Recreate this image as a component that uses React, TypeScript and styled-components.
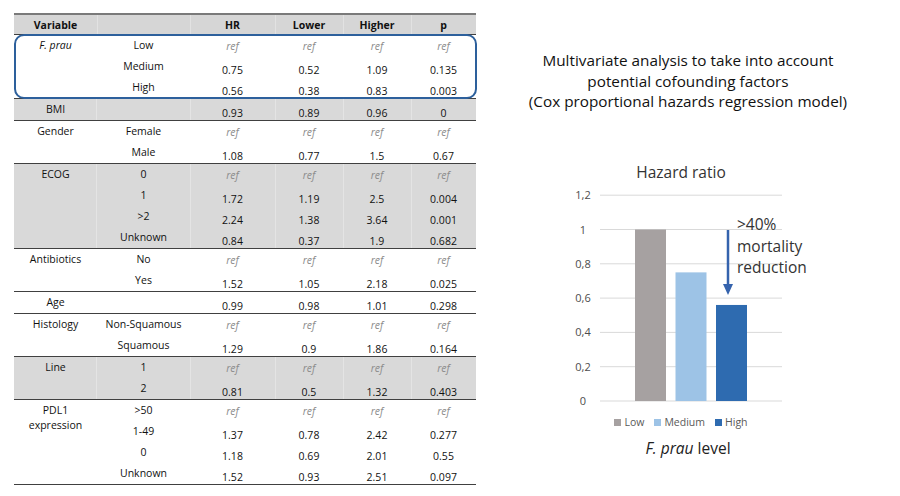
import React from 'react';
import styled, { createGlobalStyle, css } from 'styled-components';

const GlobalStyle = createGlobalStyle`
  html, body { margin: 0; padding: 0; background: #fff; }
  body { font-family: "Open Sans", "Liberation Sans", sans-serif; color: #111; }
`;

const Page = styled.div`
  display: flex;
  width: 900px;
  height: 496px;
  overflow: hidden;
  background: #fff;
`;

/* ---------- table ---------- */

const Table = styled.div`
  margin: 13px 0 0 14px;
  width: 462px;
  display: flex;
  flex-direction: column;
  font-size: 10.5px;
  flex-shrink: 0;
`;

const HeaderRow = styled.div`
  display: grid;
  grid-template-columns: 83px 93px 85px 68px 68px 65px;
  height: 19px;
  background: #d6d6d6;
  border-top: 2px solid #7a7a7a;
  border-bottom: 1px solid #404040;
  font-weight: 700;
  & > * + * { box-shadow: inset 1px 0 0 rgba(255, 255, 255, 0.3); }
`;

const HeadCell = styled.div`
  display: flex;
  align-items: center;
  justify-content: center;
`;

const Group = styled.div<{ $shaded?: boolean; $highlight?: boolean }>`
  position: relative;
  display: grid;
  grid-template-columns: 83px 1fr;
  border-bottom: 1px solid #404040;
  background: ${(p) => (p.$shaded ? '#d9d9d9' : 'transparent')};
  ${(p) =>
    p.$highlight &&
    css`
      &::after {
        content: '';
        position: absolute;
        left: 0;
        right: -1px;
        top: -1px;
        bottom: -1px;
        border: 2px solid #2d609c;
        border-radius: 10px;
        pointer-events: none;
      }
    `}
`;

const VarCell = styled.div<{ $shaded?: boolean; $italic?: boolean }>`
  text-align: center;
  line-height: 15px;
  padding-top: 3px;
  font-style: ${(p) => (p.$italic ? 'italic' : 'normal')};
  box-shadow: ${(p) => (p.$shaded ? 'inset -1px 0 0 rgba(255,255,255,0.3)' : 'none')};
`;

const SubRows = styled.div`
  display: flex;
  flex-direction: column;
`;

const SubRow = styled.div<{ $shaded?: boolean }>`
  display: grid;
  grid-template-columns: 93px 85px 68px 68px 65px;
  height: 21px;
  ${(p) =>
    p.$shaded &&
    css`
      & > * + * { box-shadow: inset 1px 0 0 rgba(255, 255, 255, 0.3); }
    `}
`;

const CatCell = styled.div`
  display: flex;
  align-items: center;
  justify-content: center;
  padding-bottom: 1px;
`;

const ValCell = styled.div<{ $isRef?: boolean }>`
  display: flex;
  align-items: center;
  justify-content: center;
  ${(p) =>
    p.$isRef
      ? css`
          font-style: italic;
          color: #8c8c8c;
        `
      : css`
          padding-top: 7px;
        `}
`;

type Row = [string, string, string, string, string] | [string];

interface GroupData {
  label: React.ReactNode;
  italic?: boolean;
  shaded?: boolean;
  highlight?: boolean;
  rows: Row[];
}

const groups: GroupData[] = [
  {
    label: 'F. prau',
    italic: true,
    highlight: true,
    rows: [['Low'], ['Medium', '0.75', '0.52', '1.09', '0.135'], ['High', '0.56', '0.38', '0.83', '0.003']],
  },
  { label: 'BMI', shaded: true, rows: [['', '0.93', '0.89', '0.96', '0']] },
  { label: 'Gender', rows: [['Female'], ['Male', '1.08', '0.77', '1.5', '0.67']] },
  {
    label: 'ECOG',
    shaded: true,
    rows: [
      ['0'],
      ['1', '1.72', '1.19', '2.5', '0.004'],
      ['>2', '2.24', '1.38', '3.64', '0.001'],
      ['Unknown', '0.84', '0.37', '1.9', '0.682'],
    ],
  },
  { label: 'Antibiotics', rows: [['No'], ['Yes', '1.52', '1.05', '2.18', '0.025']] },
  { label: 'Age', rows: [['', '0.99', '0.98', '1.01', '0.298']] },
  { label: 'Histology', rows: [['Non-Squamous'], ['Squamous', '1.29', '0.9', '1.86', '0.164']] },
  { label: 'Line', shaded: true, rows: [['1'], ['2', '0.81', '0.5', '1.32', '0.403']] },
  {
    label: (
      <>
        PDL1
        <br />
        expression
      </>
    ),
    rows: [
      ['>50'],
      ['1-49', '1.37', '0.78', '2.42', '0.277'],
      ['0', '1.18', '0.69', '2.01', '0.55'],
      ['Unknown', '1.52', '0.93', '2.51', '0.097'],
    ],
  },
];

/* ---------- right side ---------- */

const Side = styled.div`
  flex: 1;
  display: flex;
  flex-direction: column;
  align-items: center;
  padding-top: 50px;
`;

const Intro = styled.p`
  margin: 0;
  font-size: 15.3px;
  line-height: 20.7px;
  text-align: center;
  color: #111;
`;

const ChartBlock = styled.div`
  position: relative;
  align-self: flex-start;
  margin-left: 90px;
  margin-top: 50px;
  width: 230px;
  display: flex;
  flex-direction: column;
  align-items: center;
`;

const ChartTitle = styled.div`
  font-size: 15.5px;
  line-height: 20px;
  color: #333;
`;

const Plot = styled.svg`
  display: block;
  margin-top: 3px;
`;

const Annotation = styled.div`
  position: absolute;
  left: 171px;
  top: 52px;
  font-size: 15.5px;
  line-height: 21.5px;
  color: #333;
  white-space: nowrap;
`;

const Legend = styled.div`
  display: flex;
  gap: 10px;
  margin-top: 5px;
  font-size: 10.5px;
  line-height: 14px;
  color: #595959;
`;

const LegendItem = styled.div`
  display: flex;
  align-items: center;
  gap: 3px;
`;

const Swatch = styled.span<{ $color: string }>`
  width: 7px;
  height: 7px;
  background: ${(p) => p.$color};
`;

const XLabel = styled.div`
  margin-top: 9px;
  padding-left: 14px;
  font-size: 15.5px;
  line-height: 20px;
  color: #222;
`;

const BAR_COLORS = { low: '#a6a1a1', medium: '#9dc3e6', high: '#2e6bb0' };

const ticks = ['1,2', '1', '0,8', '0,6', '0,4', '0,2', '0'];
const Y0 = 216;
const SCALE = 171.5;

function HazardPlot() {
  const bars = [
    { x: 69, v: 1, c: BAR_COLORS.low },
    { x: 109.5, v: 0.75, c: BAR_COLORS.medium },
    { x: 150, v: 0.56, c: BAR_COLORS.high },
  ];
  return (
    <Plot width={230} height={225} viewBox="0 0 230 225">
      {ticks.map((t, i) => {
        const v = 1.2 - i * 0.2;
        const y = Y0 - v * SCALE;
        return (
          <g key={t}>
            <line x1={34} x2={216} y1={y} y2={y} stroke="#d9d9d9" strokeWidth={1} />
            <text
              x={17}
              y={y + 4}
              textAnchor="middle"
              fontSize={11}
              fill="#4d4d4d"
              fontFamily='"Open Sans", "Liberation Sans", sans-serif'
            >
              {t}
            </text>
          </g>
        );
      })}
      {bars.map((b) => (
        <rect key={b.x} x={b.x} y={Y0 - b.v * SCALE} width={31} height={b.v * SCALE} fill={b.c} />
      ))}
      <line x1={162} x2={162} y1={45} y2={101} stroke="#3563ad" strokeWidth={2.5} />
      <polygon points="157,99 167,99 162,110" fill="#3563ad" />
    </Plot>
  );
}

export default function App() {
  return (
    <Page>
      <GlobalStyle />
      <Table>
        <HeaderRow>
          <HeadCell>Variable</HeadCell>
          <HeadCell />
          <HeadCell>HR</HeadCell>
          <HeadCell>Lower</HeadCell>
          <HeadCell>Higher</HeadCell>
          <HeadCell>p</HeadCell>
        </HeaderRow>
        {groups.map((g, gi) => (
          <Group key={gi} $shaded={g.shaded} $highlight={g.highlight}>
            <VarCell $shaded={g.shaded} $italic={g.italic}>
              {g.label}
            </VarCell>
            <SubRows>
              {g.rows.map((r, ri) => {
                const isRef = r.length === 1;
                const vals = isRef ? ['ref', 'ref', 'ref', 'ref'] : r.slice(1);
                return (
                  <SubRow key={ri} $shaded={g.shaded}>
                    <CatCell>{r[0]}</CatCell>
                    {vals.map((v, vi) => (
                      <ValCell key={vi} $isRef={isRef}>
                        {v}
                      </ValCell>
                    ))}
                  </SubRow>
                );
              })}
            </SubRows>
          </Group>
        ))}
      </Table>
      <Side>
        <Intro>
          Multivariate analysis to take into account
          <br />
          potential cofounding factors
          <br />
          (Cox proportional hazards regression model)
        </Intro>
        <ChartBlock>
          <ChartTitle>Hazard ratio</ChartTitle>
          <HazardPlot />
          <Annotation>
            &gt;40%
            <br />
            mortality
            <br />
            reduction
          </Annotation>
          <Legend>
            <LegendItem>
              <Swatch $color={BAR_COLORS.low} />
              Low
            </LegendItem>
            <LegendItem>
              <Swatch $color={BAR_COLORS.medium} />
              Medium
            </LegendItem>
            <LegendItem>
              <Swatch $color={BAR_COLORS.high} />
              High
            </LegendItem>
          </Legend>
          <XLabel>
            <i>F. prau</i> level
          </XLabel>
        </ChartBlock>
      </Side>
    </Page>
  );
}
